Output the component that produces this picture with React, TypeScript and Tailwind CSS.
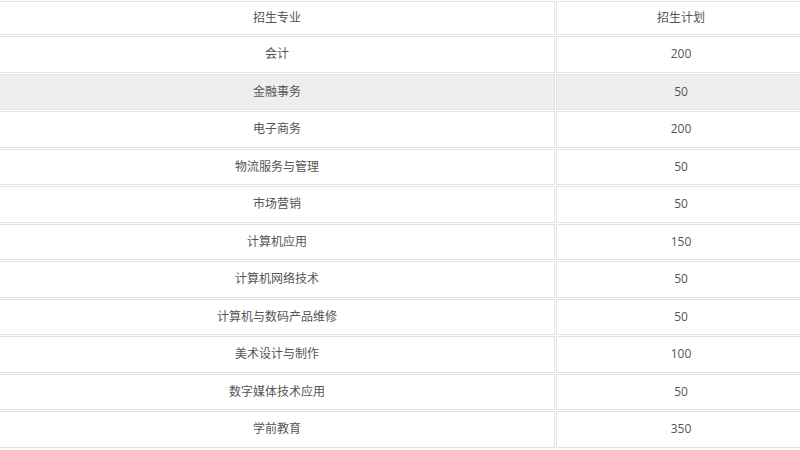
import React from "react";

const rows: [string, string][] = [
  ["会计", "200"],
  ["金融事务", "50"],
  ["电子商务", "200"],
  ["物流服务与管理", "50"],
  ["市场营销", "50"],
  ["计算机应用", "150"],
  ["计算机网络技术", "50"],
  ["计算机与数码产品维修", "50"],
  ["美术设计与制作", "100"],
  ["数字媒体技术应用", "50"],
  ["学前教育", "350"],
];

export default function App() {
  return (
    <div className="w-[800px] h-[450px] overflow-hidden bg-white">
      <table
        className="ml-[-2px] w-[809px] border-separate border-spacing-[1px] text-[12px] text-[#555555] text-center"
        style={{ fontFamily: '"Open Sans", "Noto Sans CJK SC", sans-serif' }}
      >
        <tbody>
          <tr>
            <td className="w-[556px] h-[34px] border border-[#e4e4e4] p-0">招生专业</td>
            <td className="h-[34px] border border-[#e4e4e4] p-0">招生计划</td>
          </tr>
          {rows.map(([name, num], i) => (
            <tr key={name} className={i === 1 ? "bg-[#eeeeee]" : ""}>
              <td className="h-[36.5px] border border-[#e4e4e4] p-0">{name}</td>
              <td className="h-[36.5px] border border-[#e4e4e4] p-0">{num}</td>
            </tr>
          ))}
        </tbody>
      </table>
    </div>
  );
}
